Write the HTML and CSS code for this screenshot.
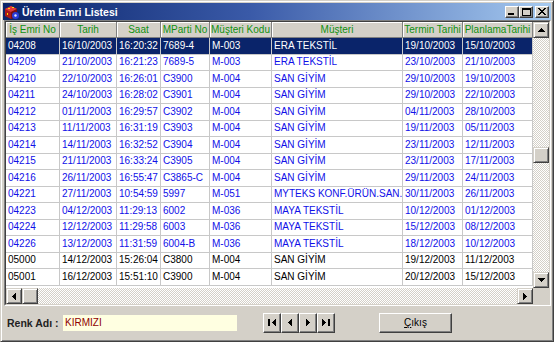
FILE: index.html
```html
<!DOCTYPE html>
<html lang="tr">
<head>
    <meta charset="UTF-8">
    <title>Üretim Emri Listesi</title>
    <link rel="stylesheet" href="styles.css">
</head>
<body>
<div class="window">
    <div class="titlebar">
        <svg class="app-icon" viewBox="0 0 16 16" width="16" height="16">
            <path d="M1 5l6-3 6 3v7l-6 3-6-3z" fill="#a81818"/>
            <path d="M1 5l6-3 6 3-6 3z" fill="#e03a3a"/>
            <path d="M7 8l6-3v7l-6 3z" fill="#7a1010"/>
            <rect x="4" y="4" width="2" height="1" fill="#ffd800"/>
            <rect x="8" y="3" width="2" height="1" fill="#ffd800"/>
            <rect x="3" y="9" width="1" height="2" fill="#ffd800"/>
            <circle cx="11.5" cy="11.5" r="3.5" fill="#2a3cd8"/>
            <circle cx="11.5" cy="11.5" r="1.2" fill="#dfe6ff"/>
        </svg>
        <span class="title">Üretim Emri Listesi</span>
        <div class="caption-buttons">
            <div class="cap-btn">
                <svg width="8" height="7" shape-rendering="crispEdges"><rect x="0" y="5" width="6" height="2"/></svg>
            </div>
            <div class="cap-btn">
                <svg width="9" height="8" shape-rendering="crispEdges"><path d="M0 0h9v8H0zM1 2v5h7V2z" fill-rule="evenodd"/></svg>
            </div>
            <div class="cap-btn cap-close">
                <svg width="8" height="7" shape-rendering="crispEdges"><path d="M0 0h2v1h1v1h2V1h1V0h2v1H7v1H6v1H5v1h1v1h1v1h1v1H6V6H5V5H3v1H2v1H0V6h1V5h1V4h1V3H2V2H1V1H0z"/></svg>
            </div>
        </div>
    </div>

    <div class="grid-frame">
        <div class="grid">
            <div class="grid-view">
                <table class="data-grid">
                    <colgroup>
                        <col class="c-no"><col class="c-date"><col class="c-time"><col class="c-lot">
                        <col class="c-code"><col class="c-cust"><col class="c-term"><col class="c-plan">
                    </colgroup>
                    <thead>
                    <tr>
                        <th>İş Emri No</th><th>Tarih</th><th>Saat</th><th>MParti No</th>
                        <th>Müşteri Kodu</th><th>Müşteri</th><th>Termin Tarihi</th><th>PlanlamaTarihi</th>
                    </tr>
                    </thead>
                    <tbody>
                    <tr class="selected"><td>04208</td><td>16/10/2003</td><td>16:20:32</td><td>7689-4</td><td>M-003</td><td>ERA TEKSTİL</td><td>19/10/2003</td><td>15/10/2003</td></tr>
                    <tr><td>04209</td><td>21/10/2003</td><td>16:21:23</td><td>7689-5</td><td>M-003</td><td>ERA TEKSTİL</td><td>23/10/2003</td><td>21/10/2003</td></tr>
                    <tr><td>04210</td><td>22/10/2003</td><td>16:26:01</td><td>C3900</td><td>M-004</td><td>SAN GİYİM</td><td>29/10/2003</td><td>19/10/2003</td></tr>
                    <tr><td>04211</td><td>24/10/2003</td><td>16:28:02</td><td>C3901</td><td>M-004</td><td>SAN GİYİM</td><td>29/10/2003</td><td>22/10/2003</td></tr>
                    <tr><td>04212</td><td>01/11/2003</td><td>16:29:57</td><td>C3902</td><td>M-004</td><td>SAN GİYİM</td><td>04/11/2003</td><td>28/10/2003</td></tr>
                    <tr><td>04213</td><td>11/11/2003</td><td>16:31:19</td><td>C3903</td><td>M-004</td><td>SAN GİYİM</td><td>19/11/2003</td><td>05/11/2003</td></tr>
                    <tr><td>04214</td><td>14/11/2003</td><td>16:32:52</td><td>C3904</td><td>M-004</td><td>SAN GİYİM</td><td>23/11/2003</td><td>12/11/2003</td></tr>
                    <tr><td>04215</td><td>21/11/2003</td><td>16:33:24</td><td>C3905</td><td>M-004</td><td>SAN GİYİM</td><td>23/11/2003</td><td>17/11/2003</td></tr>
                    <tr><td>04216</td><td>26/11/2003</td><td>16:55:47</td><td>C3865-C</td><td>M-004</td><td>SAN GİYİM</td><td>29/11/2003</td><td>24/11/2003</td></tr>
                    <tr><td>04221</td><td>27/11/2003</td><td>10:54:59</td><td>5997</td><td>M-051</td><td>MYTEKS KONF.ÜRÜN.SAN.</td><td>30/11/2003</td><td>26/11/2003</td></tr>
                    <tr><td>04223</td><td>04/12/2003</td><td>11:29:13</td><td>6002</td><td>M-036</td><td>MAYA TEKSTİL</td><td>10/12/2003</td><td>01/12/2003</td></tr>
                    <tr><td>04224</td><td>12/12/2003</td><td>11:29:58</td><td>6003</td><td>M-036</td><td>MAYA TEKSTİL</td><td>15/12/2003</td><td>08/12/2003</td></tr>
                    <tr><td>04226</td><td>13/12/2003</td><td>11:31:59</td><td>6004-B</td><td>M-036</td><td>MAYA TEKSTİL</td><td>18/12/2003</td><td>10/12/2003</td></tr>
                    <tr class="closed"><td>05000</td><td>14/12/2003</td><td>15:26:04</td><td>C3800</td><td>M-004</td><td>SAN GİYİM</td><td>19/12/2003</td><td>11/12/2003</td></tr>
                    <tr class="closed"><td>05001</td><td>16/12/2003</td><td>15:51:10</td><td>C3900</td><td>M-004</td><td>SAN GİYİM</td><td>20/12/2003</td><td>15/12/2003</td></tr>
                    </tbody>
                </table>
            </div>

            <div class="vscroll">
                <div class="sb-btn">
                    <svg width="7" height="4" shape-rendering="crispEdges"><path d="M3 0h1v1h1v1h1v1h1v1H0V3h1V2h1V1h1z"/></svg>
                </div>
                <div class="sb-track">
                    <div class="sb-thumb v-thumb"></div>
                </div>
                <div class="sb-btn">
                    <svg width="7" height="4" shape-rendering="crispEdges"><path d="M0 0h7v1H6v1H5v1H4v1H3V3H2V2H1V1H0z"/></svg>
                </div>
            </div>

            <div class="hscroll">
                <div class="sb-btn">
                    <svg width="4" height="7" shape-rendering="crispEdges"><path d="M3 0h1v7H3V6H2V5H1V4H0V3h1V2h1V1h1z"/></svg>
                </div>
                <div class="sb-thumb"></div>
                <div class="sb-track"></div>
                <div class="sb-btn">
                    <svg width="4" height="7" shape-rendering="crispEdges"><path d="M0 0h1v1h1v1h1v1h1v1H3v1H2v1H1v1H0z"/></svg>
                </div>
            </div>

            <div class="sb-corner"></div>
        </div>
    </div>

    <div class="panel">
        <span class="field-label">Renk Adı :</span>
        <div class="field-value">KIRMIZI</div>
        <div class="navigator">
            <div class="nav-btn">
                <svg width="8" height="7" shape-rendering="crispEdges"><path d="M0 0h2v7H0zM7 0h1v7H7V6H6V5H5V4H4V3h1V2h1V1h1z"/></svg>
            </div>
            <div class="nav-btn">
                <svg width="4" height="7" shape-rendering="crispEdges"><path d="M3 0h1v7H3V6H2V5H1V4H0V3h1V2h1V1h1z"/></svg>
            </div>
            <div class="nav-btn">
                <svg width="4" height="7" shape-rendering="crispEdges"><path d="M0 0h1v1h1v1h1v1h1v1H3v1H2v1H1v1H0z"/></svg>
            </div>
            <div class="nav-btn">
                <svg width="8" height="7" shape-rendering="crispEdges"><path d="M0 0h1v1h1v1h1v1h1v1H3v1H2v1H1v1H0zM6 0h2v7H6z"/></svg>
            </div>
        </div>
        <div class="exit-btn"><u>Ç</u>ıkış</div>
    </div>
</div>
</body>
</html>
```

FILE: styles.css
```css
:root {
    --face: #d4d0c8;
    --light: #ffffff;
    --shadow: #808080;
    --dark: #404040;
    --selected: #0a246a;
    --grid-line: #c8c8c8;
    --head-text: #109010;
    --row-text: #1010e8;
}

body {
    margin: 0;
    font-family: "Liberation Sans", Arial, sans-serif;
    font-size: 10px;
}

.window {
    width: 554px;
    height: 342px;
    box-sizing: border-box;
    background: var(--face);
    border: 1px solid;
    border-color: var(--face) var(--dark) var(--dark) var(--face);
    box-shadow: inset 1px 1px var(--light), inset -1px -1px var(--shadow);
    padding: 2px;
    display: flex;
    flex-direction: column;
}

/* title bar */

.titlebar {
    height: 17px;
    flex-shrink: 0;
    display: flex;
    align-items: center;
    padding-left: 1px;
    background: linear-gradient(90deg, #0a246a 0%, #3a5aa8 45%, #a6caf0 100%);
    color: #fff;
}

.app-icon {
    flex-shrink: 0;
}

.title {
    margin-left: 2px;
    font-weight: bold;
    font-size: 10.5px;
}

.caption-buttons {
    margin-left: auto;
    margin-right: 2px;
    display: flex;
}

.cap-btn {
    width: 14px;
    height: 12px;
    box-sizing: border-box;
    background: var(--face);
    border: 1px solid;
    border-color: var(--light) var(--dark) var(--dark) var(--light);
    box-shadow: inset -1px -1px var(--shadow);
    display: flex;
    align-items: center;
    justify-content: center;
}

.cap-close {
    margin-left: 2px;
}

/* grid */

.grid-frame {
    flex-shrink: 0;
    margin-left: 1px;
    border: 1px solid;
    border-color: var(--shadow) var(--light) var(--light) var(--shadow);
}

.grid {
    height: 282px;
    border: 1px solid;
    border-color: var(--dark) var(--face) var(--face) var(--dark);
    display: grid;
    grid-template-columns: 1fr 16px;
    grid-template-rows: 1fr 16px;
    background: #fff;
}

.grid-view {
    overflow: hidden;
}

.data-grid {
    border-collapse: separate;
    border-spacing: 0;
    table-layout: fixed;
    width: 527px;
}

.c-no { width: 54px; }
.c-date { width: 57px; }
.c-time { width: 44px; }
.c-lot { width: 49px; }
.c-code { width: 62px; }
.c-cust { width: 131px; }
.c-term { width: 60px; }
.c-plan { width: 70px; }

.data-grid thead tr {
    height: 16px;
}

.data-grid th {
    padding: 0 1px;
    background: var(--face);
    color: var(--head-text);
    font-weight: normal;
    text-align: center;
    white-space: nowrap;
    overflow: hidden;
    line-height: 12px;
    border-right: 1px solid var(--shadow);
    border-bottom: 1px solid var(--shadow);
    box-shadow: inset 1px 1px var(--light);
}

.data-grid tbody tr {
    height: 16.5px;
}

.data-grid td {
    padding: 0 2px;
    color: var(--row-text);
    white-space: nowrap;
    overflow: hidden;
    line-height: 12px;
    border-right: 1px solid var(--grid-line);
    border-bottom: 1px solid var(--grid-line);
}

.data-grid tr.selected td {
    background: var(--selected);
    color: #fff;
}

.data-grid tr.closed td {
    color: #000;
}

/* scroll bars */

.vscroll {
    display: flex;
    flex-direction: column;
}

.hscroll {
    display: flex;
}

.sb-btn,
.sb-thumb {
    width: 16px;
    height: 16px;
    flex-shrink: 0;
    box-sizing: border-box;
    background: var(--face);
    border: 1px solid;
    border-color: var(--face) var(--dark) var(--dark) var(--face);
    box-shadow: inset 1px 1px var(--light), inset -1px -1px var(--shadow);
    display: flex;
    align-items: center;
    justify-content: center;
}

.sb-track {
    flex: 1;
    background-color: #fff;
    background-image: repeating-conic-gradient(var(--face) 0 25%, #fff 0 50%);
    background-size: 2px 2px;
}

.v-thumb {
    margin-top: 109px;
}

.sb-corner {
    background: var(--face);
}

/* bottom panel */

.panel {
    flex: 1;
    display: flex;
    align-items: center;
    padding-left: 4px;
}

.field-label {
    width: 56px;
    font-weight: bold;
    font-size: 10.5px;
    color: #222;
}

.field-value {
    width: 174px;
    height: 16px;
    box-sizing: border-box;
    padding-left: 2px;
    background: #ffffe1;
    color: #900000;
    display: flex;
    align-items: center;
}

.navigator {
    margin-left: 26px;
    display: flex;
}

.nav-btn,
.exit-btn {
    height: 20px;
    box-sizing: border-box;
    background: var(--face);
    border: 1px solid;
    border-color: var(--light) var(--dark) var(--dark) var(--light);
    box-shadow: inset -1px -1px var(--shadow);
    display: flex;
    align-items: center;
    justify-content: center;
}

.nav-btn {
    width: 18px;
}

.exit-btn {
    margin-left: 44px;
    width: 73px;
    color: #000;
}

.exit-btn u {
    text-decoration: underline;
}
```
